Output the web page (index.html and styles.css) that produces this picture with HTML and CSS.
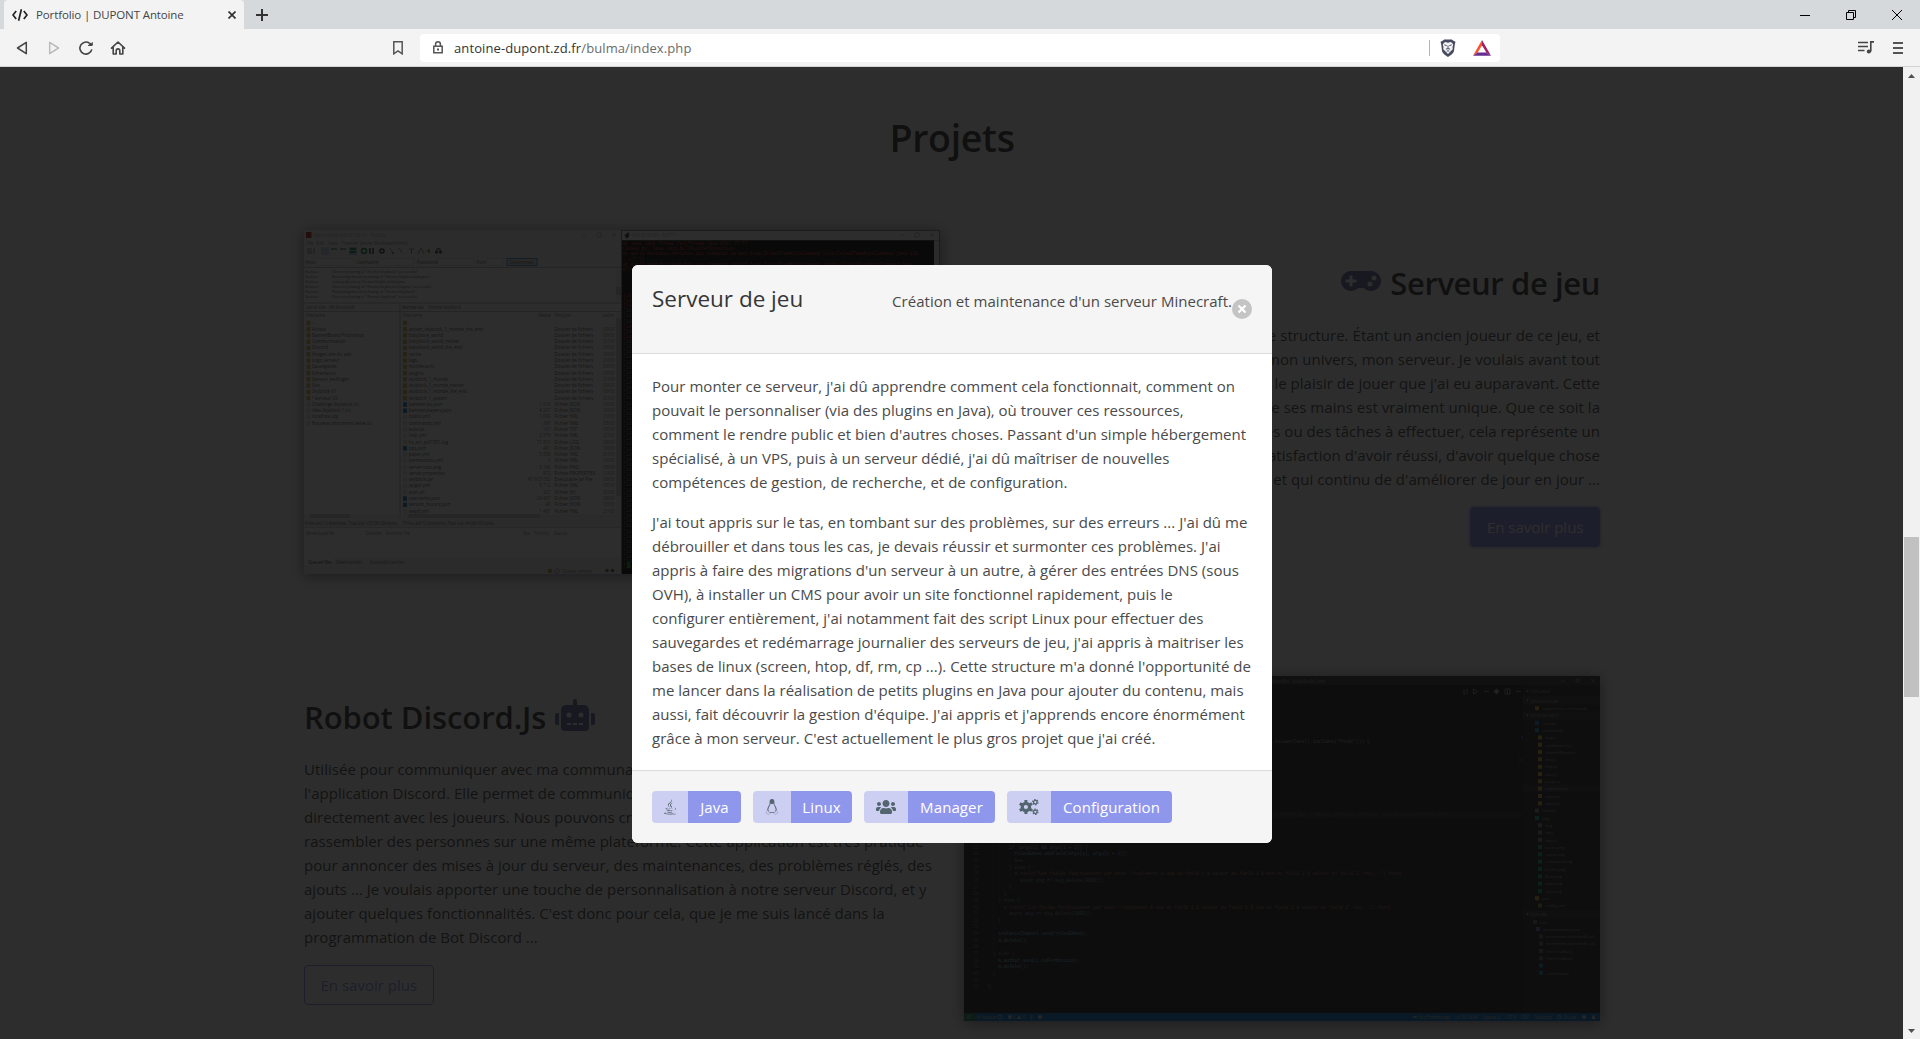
FILE: index.html
```html
<!DOCTYPE html>
<html lang="fr">
<head>
<meta charset="utf-8">
<title>Portfolio | DUPONT Antoine</title>
<link rel="stylesheet" href="styles.css">
</head>
<body>
<header class="browser">
  <div class="tabstrip">
    <div class="tab">
      <svg class="tab-icon" width="16" height="12" viewBox="0 0 16 12" fill="none" stroke="#222" stroke-width="1.7"><path d="M4.2 2 1 6l3.2 4M11.8 2 15 6l-3.2 4M9.4.3 6.6 11.7"/></svg>
      <span class="tab-title">Portfolio | DUPONT Antoine</span>
      <svg width="8" height="8" viewBox="0 0 8 8" stroke="#333" stroke-width="1.7"><path d="m.5.5 7 7m0-7-7 7"/></svg>
    </div>
    <svg class="new-tab" width="12" height="12" viewBox="0 0 12 12" stroke="#333" stroke-width="2"><path d="M6 0v12M0 6h12"/></svg>
    <div class="window-buttons">
      <svg width="10" height="10" viewBox="0 0 10 10" stroke="#000"><path d="M0 5.5h10"/></svg>
      <svg width="10" height="10" viewBox="0 0 10 10" fill="none" stroke="#000"><path d="M.5 2.5h7v7h-7zM2.500 2.500v-2h7v7h-2"/></svg>
      <svg width="10" height="10" viewBox="0 0 10 10" stroke="#000"><path d="m0 0 10 10M10 0 0 10"/></svg>
    </div>
  </div>
  <div class="toolbar">
    <div class="nav">
      <svg width="16" height="16" viewBox="0 0 16 16" fill="none" stroke="#444" stroke-width="1.5" stroke-linejoin="round"><path d="M12.300 2.300v11.400L3.500 8z"/></svg>
      <svg width="16" height="16" viewBox="0 0 16 16" fill="none" stroke="#bbb" stroke-width="1.500" stroke-linejoin="round"><path d="M3.700 2.300v11.400L12.500 8z"/></svg>
      <svg width="16" height="16" viewBox="0 0 16 16" fill="none" stroke="#444" stroke-width="1.600"><path d="M13.800 9.300A6 6 0 1 1 11.600 3.300"/><circle cx="12.600" cy="4.300" r="1.600" fill="#444" stroke="none"/><path d="M10 5.400h4.300V2.200"  stroke-width="1"/></svg>
      <svg width="16" height="16" viewBox="0 0 16 16" fill="none" stroke="#444" stroke-width="1.600" stroke-linejoin="round" stroke-linecap="round"><path d="M1.500 8.200 8 2l6.500 6.200M3.200 7v7h3v-3.300a1.800 1.800 0 0 1 3.600 0V14h3V7"/></svg>
    </div>
    <svg class="bookmark" width="10" height="14" viewBox="0 0 10 14" fill="none" stroke="#555" stroke-width="1.500"><path d="M.8.800h8.400v12L5 9.800l-4.200 3z"/></svg>
    <div class="address">
      <svg width="10" height="13" viewBox="0 0 10 13" fill="none" stroke="#555" stroke-width="1.500"><path d="M.8 5.300h8.400v6.500H.8zM2.600 5V3.200a2.400 2.400 0 0 1 4.800 0V5"/><path d="M4 8.500h2" stroke-width="2"/></svg>
      <span class="url">antoine-dupont.zd.fr<span class="url-path">/bulma/index.php</span></span>
      <span class="address-split"></span>
      <svg class="shield" width="16" height="18" viewBox="0 0 16 18"><path d="M4.200.5h7.600l2 1.600 1.700.6-.8 3.200-.7 6c-.3 2.300-4 4.700-6 6-2-1.300-5.700-3.700-6-6l-.7-6L.5 2.700l1.700-.6z" fill="#484b60"/><path d="m5 3 3 .8L11 3l2.200 2.300-.7 2.600.2 2.300L8 15l-4.700-4.800.2-2.300-.7-2.600z" fill="#f4f4f6"/><path d="m4.300 5.800 2.400.9M11.700 5.800l-2.400.9M8 6.500v3.300M5.800 10.200 8 9.600l2.200.6M6.700 12.500 8 11.600l1.300.9" fill="none" stroke="#484b60"/></svg>
      <svg width="18" height="16" viewBox="0 0 18 16"><path d="M9 0v5.300L4.700 12.500 0 15.700z" fill="#ff4f24"/><path d="M9 0v5.300l4.300 7.200 4.700 3.200z" fill="#9e1f63"/><path d="m0 15.700 4.700-3.200h8.600l4.700 3.200z" fill="#662d91"/></svg>
    </div>
    <svg class="playlist" width="16" height="13" viewBox="0 0 16 13" fill="none" stroke="#444" stroke-width="1.600"><path d="M0 1.500h10M0 5.500h10M0 9.500h6.500"/><path d="M12.800 10.500V.9H16"/><circle cx="10.900" cy="10.500" r="2.100" fill="#444" stroke="none"/></svg>
    <svg class="menu" width="10" height="12" viewBox="0 0 10 12" stroke="#555" stroke-width="2"><path d="M0 1h10M0 6h10M0 11h10"/></svg>
  </div>
</header>

<div class="viewport">
  <main class="page">
    <h1 class="page-title">Projets</h1>

    <section class="project">
      <svg class="shot" id="ftp-shot" width="636" height="344" viewBox="0 0 636 344">
        <rect width="636" height="344" fill="#fff"/>
        <rect width="318" height="37" fill="#f7f7f7"/>
        <rect x="2" y="2" width="5.500" height="6" fill="#b22"/>
        <text x="9.500" y="7" fill="#aaa">sftp://root@ 498.81.60.60 - FileZilla</text>
        <path d="M293 3h4v4h-4zM308 3l4 4m0-4-4 4M278 5h4" fill="none" stroke="#999" stroke-width=".6"/>
        <text y="15.200" fill="#888"><tspan x="2.500">File</tspan><tspan x="12.500">Edit</tspan><tspan x="24">View</tspan><tspan x="37">Transfer</tspan><tspan x="55.500">Server</tspan><tspan x="70.500">Bookmarks</tspan><tspan x="94.500">Help</tspan></text>
        <g>
          <path d="M3 18h5v6H3zM9 18h2v6H9z" fill="#bbb"/><rect x="17" y="17" width="8" height="8" fill="#bcd8f0"/><path d="M27 19h6M36 19h6" stroke="#7a9" stroke-width="2"/><rect x="45" y="17" width="8" height="8" fill="#9cc8ee"/><path d="M46 19h6M46 22h6" stroke="#283" stroke-width="2"/>
          <circle cx="60" cy="21" r="2.500" fill="none" stroke="#083" stroke-width="1.600"/><path d="M66 18v6M69 18v6" stroke="#666" stroke-width="2"/><circle cx="78" cy="21" r="2" fill="none" stroke="#333" stroke-width="1.600"/><path d="m86 18 3 5m6-5 3 5" stroke="#999"/><circle cx="89" cy="23" r="1" fill="#c33"/><path d="M105 19h5M107.500 19v5M114 24l3-6 3 6M122 21h4" stroke="#888" fill="none"/><path d="M125 19v4" stroke="#7a3" stroke-width="2"/><circle cx="132.500" cy="22" r="1.700" fill="#444"/><circle cx="136.500" cy="22" r="1.700" fill="#444"/><path d="M132.500 19h4" stroke="#444" stroke-width="1.500"/>
        </g>
        <path d="M12 28.500h37v7H12zM73.500 28.500h36v7h-36zM133 28.500h37v7h-37zM183 28.500h16v7h-16z" fill="#fff" stroke="#ccc" stroke-width=".5"/>
        <rect x="203" y="28.500" width="30" height="7" fill="#e2e2e2" stroke="#17c" stroke-width=".8"/>
        <text y="33.800" fill="#666"><tspan x="1">Host:</tspan><tspan x="52.500">Username:</tspan><tspan x="113">Password:</tspan><tspan x="172.500">Port:</tspan><tspan x="205.500" textLength="25">Quickconnect</tspan></text>
        <path d="M0 37.500h318M0 73h318M0 81.500h318M96 73v224M0 297.500h318" stroke="#bbb" fill="none"/>
        <text y="78.900" fill="#666"><tspan x="2">Local site:</tspan><tspan x="25">Mr.Siomsoft</tspan><tspan x="98" textLength="22">Remote site:</tspan><tspan x="124">/home/skyblock</tspan></text>
        <text y="86.900" fill="#777"><tspan x="2">Filename</tspan><tspan x="99">Filename</tspan><tspan x="234" textLength="13">Filesize</tspan><tspan x="250.500">Filetype</tspan><tspan x="298" textLength="12">Last m</tspan></text>
        <g id="log-lines"></g><g id="local-files"></g><g id="remote-files"></g>
        <path d="M0 284h96v4H0zM98 284h214v4H98zM312 82h5v206h-5zM312 40h5v31h-5z" fill="#eee"/><path d="M6 284h40v4H6zM104 284h132v4H104zM312 88h5v178h-5zM312 57h5v8h-5z" fill="#ccc"/>
        <rect y="288.500" width="318" height="9" fill="#f0f0f0"/>
        <text y="295" fill="#666"><tspan x="1" textLength="92" lengthAdjust="spacingAndGlyphs">4 files and 12 directories. Total size: 133 986 824 bytes</tspan><tspan x="98" textLength="92" lengthAdjust="spacingAndGlyphs">19 files and 12 directories. Total size: 44 024 570 bytes</tspan></text>
        <text y="304.800" fill="#888"><tspan x="2" textLength="28">Server/Local file</tspan><tspan x="62" textLength="16">Direction</tspan><tspan x="82">Remote file</tspan><tspan x="219" textLength="7">Size</tspan><tspan x="230">Priority</tspan><tspan x="250">Status</tspan></text>
        <path d="M0 328h318v16H0z" fill="#f0f0f0"/><rect x="1" y="328" width="28" height="7" fill="#fff"/>
        <text y="333.500" fill="#777"><tspan x="4" fill="#333" textLength="24">Queued files</tspan><tspan x="32" textLength="27">Failed transfers</tspan><tspan x="66" textLength="35">Successful transfers</tspan><tspan x="258" y="342.500">Queue: empty</tspan></text>
        <circle cx="246" cy="341" r="2.300" fill="#b93"/><circle cx="253" cy="341" r="2.300" fill="none" stroke="#999"/><circle cx="303" cy="340.500" r="1.800" fill="#484"/><circle cx="308.500" cy="340.500" r="1.800" fill="#844"/>
        <rect x="317" width="319" height="344" fill="#888"/><rect x="318" y="1" width="317" height="9" fill="#fff"/><rect x="318" y="10.500" width="312" height="333.500" fill="#000"/><rect x="630" y="10.500" width="5" height="333" fill="#eee"/>
        <path d="m321 6 4-3M322 8l3-3" stroke="#333" stroke-width="2"/><text x="328" y="7" fill="#aaa">498.81.60.60 - PuTTY</text>
        <path d="M611 3h4v4h-4zM626 3l4 4m0-4-4 4M597 5h4" fill="none" stroke="#999" stroke-width=".6"/>
        <g class="console" id="console-lines"></g>
        <rect x="323" y="332" width="3" height="6" fill="#0a0"/>
      </svg>
      <div class="project-text project-text-right">
        <h2 class="project-title"><svg width="40" height="32" viewBox="0 0 640 512"><path d="M480.070 96H160a160 160 0 1 0 114.240 272h91.500A160 160 0 1 0 480.070 96zM248 268a12 12 0 0 1-12 12h-52v52a12 12 0 0 1-12 12h-24a12 12 0 0 1-12-12v-52H84a12 12 0 0 1-12-12v-24a12 12 0 0 1 12-12h52v-52a12 12 0 0 1 12-12h24a12 12 0 0 1 12 12v52h52a12 12 0 0 1 12 12zm216 76a40 40 0 1 1 40-40 40 40 0 0 1-40 40zm64-96a40 40 0 1 1 40-40 40 40 0 0 1-40 40z"/></svg><span>Serveur de jeu</span></h2>
        <p class="copy">Mise en place et gestion d'une structure. Étant un ancien joueur de ce jeu, et<br>je voulais créer mon univers, mon serveur. Je voulais avant tout<br>partager le plaisir de jouer que j'ai eu auparavant. Cette<br>création de ses mains est vraiment unique. Que ce soit la<br>des problèmes ou des tâches à effectuer, cela représente un<br>défi, et la satisfaction d'avoir réussi, d'avoir quelque chose<br>de concret et qui continu de d'améliorer de jour en jour ...</p>
        <a class="button button-filled">En savoir plus</a>
      </div>
    </section>

    <section class="project project-second">
      <div class="project-text">
        <h2 class="project-title"><span>Robot Discord.Js</span><svg width="40" height="32" viewBox="0 0 640 512"><path d="M32 224H64V416H32A32 32 0 0 1 0 384V256A32 32 0 0 1 32 224Zm512-48V448a64 64 0 0 1-64 64H160a64 64 0 0 1-64-64V176a80 80 0 0 1 80-80H288V32a32 32 0 0 1 64 0V96H464A80 80 0 0 1 544 176ZM264 256a40 40 0 1 0-40 40A40 40 0 0 0 264 256Zm-8 128H192v32h64Zm96 0H288v32h64ZM456 256a40 40 0 1 0-40 40A40 40 0 0 0 456 256Zm-8 128H384v32h64ZM640 256V384a32 32 0 0 1-32 32H576V224h32A32 32 0 0 1 640 256Z"/></svg></h2>
        <p class="copy">Utilisée pour communiquer avec ma communauté via<br>l'application Discord. Elle permet de communiquer<br>directement avec les joueurs. Nous pouvons créer et<br>rassembler des personnes sur une même plateforme. Cette application est très pratique<br>pour annoncer des mises à jour du serveur, des maintenances, des problèmes réglés, des<br>ajouts ... Je voulais apporter une touche de personnalisation à notre serveur Discord, et y<br>ajouter quelques fonctionnalités. C'est donc pour cela, que je me suis lancé dans la<br>programmation de Bot Discord ...</p>
        <a class="button">En savoir plus</a>
      </div>
      <svg class="shot" id="code-shot" width="636" height="345" viewBox="0 0 636 345">
        <rect width="636" height="345" fill="#1e1e1e"/><rect width="636" height="9" fill="#323233"/>
        <text x="307" y="6.500" fill="#999" textLength="54">MynthBot - Visual Studio Code</text>
        <path d="M597 5h4M612 3h3v3h-3zM627 3l3.500 3.500m0-3.500-3.500 3.500" fill="none" stroke="#aaa" stroke-width=".6"/>
        <path d="M500 13v5h1m2-5v5M509.500 13v5l4-2.500zM520 15.500h5M541 13h5v5h-5zM543.500 13v5M552 15.500h5" fill="none" stroke="#aaa" stroke-width=".8"/><path d="m532.500 12.500 3 3-3 3-3-3z" fill="#aaa"/>
        <path d="M308 138.500h250" stroke="#2b2b2b" stroke-width="6"/><path d="M555.500 28v309" stroke="#333" stroke-width=".5"/><rect x="557" y="60" width="2" height="3" fill="#44a"/><path d="M555 84h5" stroke="#777" stroke-width=".7"/>
        <path d="M24 168v142M29.500 168v104M35 168v55M40.500 168v48" stroke="#404040" stroke-width=".5"/>
        <g class="code" id="code-lines"></g>
        <rect x="559" y="9" width="77" height="328" fill="#252526"/><path d="M559 20.500h77v8h-77zM559 35.500h77v8h-77zM559 234.500h77v7h-77z" fill="#333335"/><rect x="559" y="109" width="77" height="7" fill="#37373d"/>
        <g id="tree-rows" class="tree"></g>
        <rect y="337" width="636" height="8" fill="#007acc"/><rect y="337" width="11" height="8" fill="#16825d"/>
        <path d="M3 340h4l-1-1M7 342H3l1 1M14 339v4M16.500 339.500v1L14 342M34 341a2 2 0 1 0 4 0 2 2 0 1 0-4 0M68 339l-1.500 2.500h2L67 344" fill="none" stroke="#ccc" stroke-width=".7"/><circle cx="46" cy="341" r="2" fill="#ccc"/><path d="m55 339 2.300 4h-4.600z" fill="#ccc"/><circle cx="76" cy="341" r="2" fill="#ccc"/><path d="M449 341h4" stroke="#ccc" stroke-width="1.500"/><circle cx="595.500" cy="341" r="1.700" fill="none" stroke="#ccc" stroke-width=".8"/><circle cx="620" cy="341" r="2" fill="#ccc"/><path d="M627.500 343c1-1 .5-4 2-4s1 3 2 4z" fill="#ccc"/>
        <text y="342.900" fill="#bbb"><tspan x="18">master</tspan><tspan x="49">0</tspan><tspan x="58.500">0</tspan><tspan x="454" textLength="32">You, 5 months ago</tspan><tspan x="491" textLength="23">Ln 19, Col 94</tspan><tspan x="519" textLength="17">Spaces: 2</tspan><tspan x="541" textLength="11">UTF-8</tspan><tspan x="557" textLength="8">CRLF</tspan><tspan x="571" textLength="17">JavaScript</tspan><tspan x="599" textLength="13">Go Live</tspan></text>
      </svg>
    </section>
  </main>

  <div class="modal">
    <div class="modal-card">
      <div class="modal-head">
        <h3 class="modal-title">Serveur de jeu</h3>
        <p class="modal-subtitle">Création et maintenance d'un serveur Minecraft.</p>
        <svg class="modal-close" width="20" height="20" viewBox="0 0 20 20"><circle cx="10" cy="10" r="10" fill="#c4c4c4"/><path d="m6.500 6.500 7 7m0-7-7 7" stroke="#fff" stroke-width="2.200"/></svg>
      </div>
      <div class="modal-body">
        <p class="copy">Pour monter ce serveur, j'ai dû apprendre comment cela fonctionnait, comment on<br>pouvait le personnaliser (via des plugins en Java), où trouver ces ressources,<br>comment le rendre public et bien d'autres choses. Passant d'un simple hébergement<br>spécialisé, à un VPS, puis à un serveur dédié, j'ai dû maîtriser de nouvelles<br>compétences de gestion, de recherche, et de configuration.</p>
        <p class="copy">J'ai tout appris sur le tas, en tombant sur des problèmes, sur des erreurs ... J'ai dû me<br>débrouiller et dans tous les cas, je devais réussir et surmonter ces problèmes. J'ai<br>appris à faire des migrations d'un serveur à un autre, à gérer des entrées DNS (sous<br>OVH), à installer un CMS pour avoir un site fonctionnel rapidement, puis le<br>configurer entièrement, j'ai notamment fait des script Linux pour effectuer des<br>sauvegardes et redémarrage journalier des serveurs de jeu, j'ai appris à maitriser les<br>bases de linux (screen, htop, df, rm, cp ...). Cette structure m'a donné l'opportunité de<br>me lancer dans la réalisation de petits plugins en Java pour ajouter du contenu, mais<br>aussi, fait découvrir la gestion d'équipe. J'ai appris et j'apprends encore énormément<br>grâce à mon serveur. C'est actuellement le plus gros projet que j'ai créé.</p>
      </div>
      <div class="modal-foot">
        <div class="tag tag-java"><span class="tag-icon"><svg width="12" height="16" viewBox="0 0 384 512"><path d="M277.740 312.900c9.800-6.700 23.400-12.500 23.400-12.500s-38.700 7-77.200 10.200c-47.100 3.900-97.700 4.700-123.100 1.300-60.100-8 33-30.100 33-30.100s-36.100-2.400-80.600 19c-52.500 25.400 130 37 224.500 12.100zm-85.400-32.100c-19-42.700-83.100-80.200 0-145.800C296 53.200 242.840 0 242.840 0c21.500 84.500-75.600 110.100-110.700 162.600-23.900 35.900 11.700 74.400 60.200 118.200zm114.600-176.200c.1 0-175.200 43.800-91.500 140.200 24.700 28.400-6.500 54-6.500 54s62.700-32.400 33.900-72.900c-26.900-37.800-47.500-56.600 64.100-121.300zm-6.100 270.500a12.190 12.190 0 0 1-2 2.600c128.300-33.700 81.100-118.900 19.800-97.300a17.330 17.330 0 0 0-8.200 6.300 70.450 70.450 0 0 1 11-3c31-6.500 75.500 41.500-20.600 91.400zM348 437.400s14.500 11.900-15.900 21.200c-57.900 17.500-240.800 22.800-291.600.7-18.300-7.900 16-19 26.800-21.300 11.200-2.400 17.700-2 17.700-2-20.300-14.300-131.300 28.100-56.400 40.200C232.840 509.400 401 461.300 348 437.400zM124.440 396c-78.700 22 47.900 67.400 148.100 24.500a185.890 185.890 0 0 1-28.200-13.800c-44.700 8.500-65.400 9.100-106 4.500-33.500-3.800-13.900-15.200-13.900-15.200zm179.800 97.200c-78.700 14.800-175.800 13.100-233.300 3.600 0-.1 11.800 9.700 72.400 13.600 92.200 5.900 233.800-3.300 237.100-46.900 0 0-6.400 16.500-76.200 29.700zM260.640 353c-59.200 11.400-93.500 11.100-136.800 6.600-33.500-3.500-11.600-19.700-11.600-19.700-86.800 28.800 48.200 61.400 169.500 25.900a60.370 60.370 0 0 1-21.100-12.800z"/></svg></span><span class="tag-label">Java</span></div>
        <div class="tag tag-linux"><span class="tag-icon"><svg width="14" height="16" viewBox="0 0 14 16"><path d="M7 0C5.200 0 4.500 1.200 4.600 3c.1 2-.1 2.500-1 4-.9 1.400-1.400 3-1.400 4.400L3.400 13h7.200l1.200-1.600c0-1.600-.5-3-1.400-4.400-.9-1.500-1-2-1-4C9.400 1.200 8.700 0 7 0zM5.700 4.600 7 5.300l1.500-.7c.4 2.200 2 3.800 2.200 6.200L9.200 13.700H4.800L3.300 10.800c.2-2.400 1.900-4 2.400-6.200z" fill-rule="evenodd"/><path d="M2.800 11.300 5 14.500l-.8 1L1 14.300l.5-2zM11.200 11.300 9 14.500l.8 1 3.200-1.600-.7-1.600z" fill="#cdcff2" stroke="#8a95ab" stroke-width=".5"/></svg></span><span class="tag-label">Linux</span></div>
        <div class="tag tag-manager"><span class="tag-icon"><svg width="20" height="16" viewBox="0 0 640 512"><path d="M96 224c35.300 0 64-28.700 64-64s-28.700-64-64-64-64 28.700-64 64 28.700 64 64 64zm448 0c35.300 0 64-28.700 64-64s-28.700-64-64-64-64 28.700-64 64 28.700 64 64 64zm32 32h-64c-17.600 0-33.500 7.100-45.100 18.600 40.300 22.100 68.900 62 75.100 109.400h66c17.700 0 32-14.300 32-32v-32c0-35.300-28.700-64-64-64zm-256 0c61.900 0 112-50.100 112-112S381.900 32 320 32 208 82.100 208 144s50.100 112 112 112zm76.800 32h-8.300c-20.800 10-43.900 16-68.500 16s-47.600-6-68.500-16h-8.300C179.600 288 128 339.600 128 403.200V432c0 26.500 21.500 48 48 48h288c26.500 0 48-21.500 48-48v-28.800c0-63.600-51.600-115.200-115.200-115.200zm-223.700-13.400C161.500 263.100 145.600 256 128 256H64c-35.300 0-64 28.700-64 64v32c0 17.700 14.300 32 32 32h65.900c6.300-47.400 34.900-87.300 75.200-109.400z"/></svg></span><span class="tag-label">Manager</span></div>
        <div class="tag tag-config"><span class="tag-icon"><svg width="20" height="16" viewBox="0 0 20 16" fill="none" stroke="#53656f"><circle cx="6.900" cy="8" r="3.700" stroke-width="3.200"/><path d="M6.900.9v2.800M6.900 12.300v2.800M.8 4.500l2.400 1.400M10.600 10.100l2.400 1.400M.8 11.500l2.400-1.400M10.600 5.900 13 4.500" stroke-width="3"/><circle cx="16.300" cy="3.200" r="1.800" stroke-width="1.300"/><circle cx="16.300" cy="3.200" r="2.700" stroke-width="1.100" stroke-dasharray="1.500 1.327"/><circle cx="16.300" cy="12.800" r="1.800" stroke-width="1.300"/><circle cx="16.300" cy="12.800" r="2.700" stroke-width="1.100" stroke-dasharray="1.500 1.327"/></svg></span><span class="tag-label">Configuration</span></div>
      </div>
    </div>
  </div>

  <div class="scrollbar">
    <svg width="7" height="4" viewBox="0 0 7 4"><path d="M0 4 3.500 0 7 4z" fill="#505050"/></svg>
    <div class="thumb"></div>
    <svg width="7" height="4" viewBox="0 0 7 4"><path d="m0 0 3.500 4L7 0z" fill="#505050"/></svg>
  </div>
</div>
<script src="shots.js"></script>
</body>
</html>
```
FILE: styles.css
```css
* { box-sizing: border-box; margin: 0; padding: 0; }
body { width: 1920px; height: 1039px; overflow: hidden; display: flex; flex-direction: column; background: #fff; font-family: "Open Sans", "Noto Sans", sans-serif; font-size: 15px; color: #4a4a4a; }
svg { display: block; flex: none; }

.browser { height: 67px; background: #f3f3f3; border-bottom: 1px solid #d0d4d7; }
.tabstrip { height: 29px; background: #d5d9dc; display: flex; align-items: center; padding-left: 4px; }
.tab { width: 240px; height: 29px; background: #f3f3f3; border-radius: 4px 4px 0 0; display: flex; align-items: center; padding: 0 8px; }
.tab-title { flex: 1; margin-left: 8px; font-size: 11.5px; letter-spacing: -.12px; color: #444; white-space: nowrap; }
.new-tab { margin-left: 12px; }
.window-buttons { margin-left: auto; display: flex; gap: 36px; padding-right: 18px; }
.toolbar { height: 37px; display: flex; align-items: center; }
.nav { display: flex; gap: 16px; margin-left: 14px; width: 379px; }
.bookmark { margin-right: 17px; }
.address { width: 1080px; height: 28px; background: #fff; border-radius: 4px; display: flex; align-items: center; padding: 0 9px 0 13px; }
.url { flex: 1; margin-left: 11px; font-size: 13px; letter-spacing: .1px; color: #333; }
.url-path { color: #6b6b6b; }
.address-split { width: 1px; height: 16px; background: #b5b5b5; margin-right: 10px; }
.shield { margin-right: 17px; }
.playlist { margin-left: 358px; }
.menu { margin-left: 19px; }

.viewport { position: relative; flex: 1; display: flex; overflow: hidden; }
.page { width: 1903px; height: 972px; overflow: hidden; padding: 48px 303px 0 304px; }
.page-title { text-align: center; font-size: 37.500px; font-weight: 600; line-height: 45px; letter-spacing: -.3px; color: #363636; }
.project { margin-top: 70px; height: 344px; display: grid; grid-template-columns: 636px 636px; column-gap: 24px; }
.project-second { margin-top: 102px; }
.shot { box-shadow: 0 2px 14px rgba(20, 20, 70, .55); font-family: "Open Sans", sans-serif; font-size: 4.500px; }
.project-text { padding-top: 23px; white-space: nowrap; min-width: 0; }
.project-text-right { display: flex; flex-direction: column; align-items: flex-end; text-align: right; padding-top: 35px; }
.project-title { display: flex; gap: 9px; font-size: 31px; font-weight: 600; line-height: 36px; letter-spacing: -.4px; color: #363636; fill: #6c6ca8; margin-bottom: 22px; }
.project-second .project-title { letter-spacing: -.08px; }
.copy { font-size: 15px; line-height: 24px; letter-spacing: .03px; white-space: nowrap; }
.button { display: inline-flex; align-items: center; height: 40px; padding: 0 15.500px; margin-top: 16px; border: 1px solid #8d95ec; border-radius: 4px; color: #8d95ec; font-size: 15px; }
.button-filled { background: #8d95ec; color: #fff; box-shadow: 0 0 0 2px rgba(141, 149, 236, .25); }
.console, .code { font-family: "Liberation Mono", monospace; font-size: 4.520px; white-space: pre; }
.tree { font-size: 4.200px; letter-spacing: -.1px; }

.modal { position: absolute; top: 0; left: 0; width: 1903px; height: 972px; background: rgba(10, 10, 10, .86); padding-top: 198px; }
.modal-card { width: 640px; margin: 0 auto 0 632px; border-radius: 6px; overflow: hidden; background: #fff; }
.modal-head { height: 89px; padding: 20px; display: flex; align-items: flex-start; background: #f5f5f5; border-bottom: 1px solid #dbdbdb; }
.modal-title { flex: 1; font-size: 22.500px; font-weight: 400; line-height: 28px; letter-spacing: 0; color: #363636; }
.modal-subtitle { line-height: 32px; letter-spacing: .02px; white-space: nowrap; }
.modal-close { margin-top: 14px; }
.modal-body { padding: 20px; height: 416px; }
.copy + .copy { margin-top: 16px; }
.modal-foot { height: 73px; padding: 20px; border-top: 1px solid #dbdbdb; background: #f5f5f5; display: flex; gap: 12px; }
.tag { height: 32px; display: flex; border-radius: 4px; overflow: hidden; }
.tag-icon { display: flex; align-items: center; justify-content: center; background: #cdcff2; fill: #53656f; width: 44px; }
.tag-label { flex: 1; display: flex; align-items: center; justify-content: center; background: #8f97ed; color: #fff; font-weight: 500; letter-spacing: .1px; }
.tag-java { width: 89px; }
.tag-java .tag-icon { width: 36px; }
.tag-linux { width: 99px; }
.tag-linux .tag-icon { width: 38px; }
.tag-manager { width: 131px; }
.tag-config { width: 165px; }

.scrollbar { width: 17px; height: 972px; background: #f1f1f1; display: flex; flex-direction: column; align-items: center; padding: 7px 0 6px; }
.thumb { width: 15px; height: 160px; background: #c1c1c1; margin: 459px 0 auto; }
```
FILE: shots.js
```js
const NS = 'http://www.w3.org/2000/svg';
function add(parent, tag, attrs, text) {
  const el = document.createElementNS(NS, tag);
  for (const k in attrs) el.setAttribute(k, attrs[k]);
  if (text !== undefined) el.textContent = text;
  parent.appendChild(el);
}
const byId = id => document.getElementById(id);

const log = byId('log-lines');
['Directory listing of "/home/skyblock" successful', 'Retrieving directory listing of "/home/skyblock/plugins"...', 'Listing directory /home/skyblock/plugins', 'Directory listing of "/home/skyblock/plugins" successful', 'Retrieving directory listing of "/home/skyblock"...', 'Directory listing of "/home/skyblock" successful'].forEach((t, i) => {
  add(log, 'text', { x: 1, y: 42.8 + i * 5, fill: '#666', 'font-size': 4.3 }, 'Status:');
  add(log, 'text', { x: 28, y: 42.8 + i * 5, fill: '#666', textLength: [85, 101, 73, 99, 87, 85][i], 'font-size': 4.3 }, t);
});

const local = byId('local-files');
['..', 'Achats', 'BannerBoard Photoshop', 'Communication', 'Discord', 'Images site du wiki', 'Logo serveur', 'Sauvegarde', 'Schematics', 'Serveur JeePlugin', 'Site', 'Skyblock V1', '• Serveur V2', 'Challenge Skyblock.txt', 'Idea Skyblock 1.txt', 'localhost.sql', 'Nouveau document texte.txt'].forEach((t, i) => {
  const y = 92.7 + i * 6.27;
  add(local, 'rect', { x: 2.5, y: y - 2, width: 4, height: 4.5, fill: i < 13 ? '#c9b05a' : '#e4e4e4' });
  add(local, 'text', { x: 8, y: y + 1.7, fill: '#555' }, t);
});

const remote = byId('remote-files');
['..', 'ancien_skyblock_1_monde_the_end', 'bskyblock_world', 'bskyblock_world_nether', 'bskyblock_world_the_end', 'cache', 'logs', 'mondecachi', 'plugins', 'skyblock_1_monde', 'skyblock_1_monde_nether', 'skyblock_1_monde_the_end', 'skyblock_1_spawn', 'banned-ips.json|1 218|JSON', 'banned-players.json|4 207|JSON', 'bukkit.yml|1 092|YML', 'commands.yml|280|YML', 'eula.txt|181|TXT', 'help.yml|2 576|YML', 'hs_err_pid1351.log|71 816|LOG', 'ops.json|481|JSON', 'paper.yml|5 338|YML', 'permissions.yml|0|YML', 'server-icon.png|8 186|PNG', 'server.properties|872|PROPERTIES', 'skyblock.jar|43 903 652|JAR', 'spigot.yml|5 712|YML', 'start.sh|221|SH', 'usercache.json|24 487|JSON', 'version_history.json|48|JSON', 'wepif.yml|1 487|YML'].forEach((row, i) => {
  const [name, size, kind] = row.split('|');
  const y = 92.7 + i * 6.27;
  add(remote, 'rect', { x: 99, y: y - 2, width: 4, height: 4.5, fill: i < 13 ? '#c9b05a' : kind === 'JSON' ? '#17b' : '#e4e4e4' });
  add(remote, 'text', { x: 104.7, y: y + 1.7, fill: '#555' }, name);
  if (size) add(remote, 'text', { x: 246.7, y: y + 1.7, 'text-anchor': 'end', fill: '#777' }, size);
  if (i) {
    add(remote, 'text', { x: 250.5, y: y + 1.7, fill: '#555' }, kind === 'JAR' ? 'Executable Jar File' : kind ? 'Fichier ' + kind : 'Dossier de fichiers');
    add(remote, 'text', { x: 299, y: y + 1.7, fill: '#888', textLength: 12 }, i % 3 ? '03/03/' : '21/03/');
  }
});

const con = byId('console-lines');
const trace = ['        at java.lang.Thread.run(Thread.java:834) [?:?]', 'Caused by: java.lang.NullPointerException', '        at world.bentobox.bentobox.api.commands.island.team.IslandTeamKickCommand.kick(IslandTeamKickCommand.java:131', ') ~[?:?]', '        at world.bentobox.bentobox.api.commands.island.team.IslandTeamKickCommand.lambda(IslandTeamKickCommand.java', '87) ~[?:?]'];
trace.forEach((t, i) => add(con, 'text', { x: 318.5, y: 15 + i * 5.2, fill: '#c33' }, t));
for (let i = 0; i < 54; i++) add(con, 'text', { x: 319, y: 67 + i * 5.12, fill: i < 3 || i === 6 || i === 8 ? '#b33' : '#777' }, '[18:');

const code = byId('code-lines');
const line = n => 172.8 + (n - 21) * 6.64;
for (let n = 21; n <= 42; n++) add(code, 'text', { x: 9, y: line(n), fill: '#666' }, n);
const reply = 'm.reply("Les fields fonctionnent par deux \'!reglement & nom du field 1 & valeur du field 1 & nom du field 2 & valeur du field 2\' etc...").then(';
[[21, 45, 'if (args[i] && args[i + 1]) {', '#9ac'], [22, 50.5, 'rulesEmbed.addField(args[i], args[i + 1]);', '#8ac'], [23, 50.5, 'i++', '#9ac'], [24, 45, '} else {', '#987'], [25, 50.5, reply, '#a7735f'], [26, 56, 'async msg => msg.delete(3000));', '#79a'], [27, 45, '}', '#888'], [28, 39.8, '}', '#a93'], [29, 34.3, '} else {', '#69b'], [30, 39.8, reply, '#a7735f'], [31, 45, 'async msg => msg.delete(3000));', '#79a'], [32, 34.3, '}', '#79b'], [34, 34.3, 'instanceChannel.send(rulesEmbed);', '#7bd'], [35, 34.3, 'm.delete();', '#8bb'], [37, 29, '} else {', '#888'], [38, 34.3, 'm.author.send(L.noPermission);', '#7bd'], [39, 34.3, 'm.delete();', '#8bb'], [40, 29, '}', '#777'], [42, 23.5, '};', '#aa6']].forEach(([n, x, t, fill]) => add(code, 'text', { x, y: line(n), fill }, t));
add(code, 'text', { x: 308, y: 66.8, fill: '#aa9' }, '.toLowerCase().includes("fondx"))) {');
add(code, 'text', { x: 310, y: 140, fill: '#555' }, '5 months ago • Adding commands (reload, all discord.channel.name)');

const tree = byId('tree-rows');
[[15.5, 566, 'EXPLORER'], [24.8, 566, 'OPEN EDITORS'], [32.3, 578, 'reglement.js  commands', '#ca3'], [39.5, 566, '(JS) MYNTHBOT'], [46.8, 578, '.vscode', '#28b'], [54.2, 578, 'commands', '#29b'], [61.5, 581, 'bug.js', '#ca3'], [68.8, 581, 'candidature.js', '#ca3'], [76, 581, 'channelName.js', '#ca3'], [83.3, 581, 'first.js', '#ca3'], [90.7, 581, 'help.js', '#ca3'], [98, 581, 'idea.js', '#ca3'], [105.3, 581, 'purge.js', '#ca3'], [112.6, 581, 'reglement.js', '#ca3'], [120, 581, 'regles.js', '#ca3'], [127.3, 581, 'report.js', '#ca3'], [134.6, 578, 'handler', '#888'], [142, 578, 'img', '#2a9'], [149.3, 581, 'bug', '#888'], [156.5, 581, 'idea', '#888'], [163.8, 581, 'report', '#888'], [171, 581, 'books.png', '#2a8'], [178.4, 581, 'cancel.png', '#2a8'], [185.6, 581, 'command.png', '#2a8'], [193, 581, 'profile.png', '#2a8'], [200.3, 581, 'Rules.jpg', '#2a8'], [207.6, 581, 'rules.png', '#2a8'], [215, 581, 'valid.png', '#2a8'], [222.2, 578, 'json', '#ca3'], [229.5, 581, 'config.json', '#a83'], [238.3, 566, 'OUTLINE'], [246, 576, 'run', '#767'], [253, 579, 'module.exports.run', '#86a'], [260.3, 582, 'm.member.roles.find() call...', '#767'], [267.6, 582, 'm.member.roles.find() call...', '#767'], [275, 582, 'then() callback', '#767'], [282.2, 582, 'then() callback', '#767'], [289.5, 582, 'i', '#28b'], [296.8, 582, 'rulesEmbed', '#28b']].forEach(([y, x, t, fill]) => {
  if (fill) add(tree, 'rect', { x: x - 7, y: y - 2, width: 4, height: 4, fill });
  else add(tree, 'path', { d: `M562.500 ${y - 1}h2l-1 2z`, fill: '#bbb' });
  const attrs = { x, y: y + 1.7, fill: '#999' };
  if (t.startsWith('m.member')) attrs.textLength = 51;
  add(tree, 'text', attrs, t);
});
```
